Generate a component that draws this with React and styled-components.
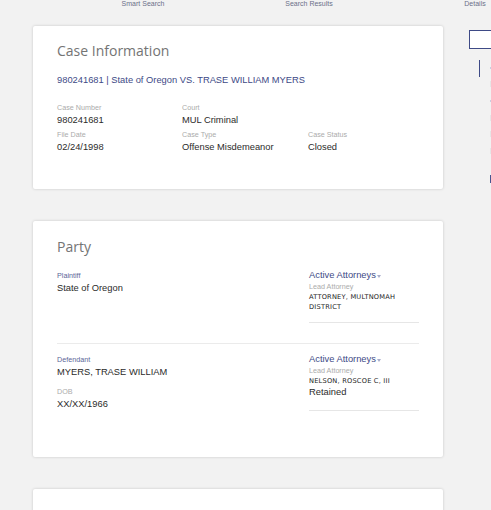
import React from "react";
import styled, { createGlobalStyle } from "styled-components";

const Global = createGlobalStyle`
  html, body { margin: 0; padding: 0; background: #f2f2f2; overflow: hidden; }
  body { font-family: "Liberation Sans", Arial, sans-serif; width: 491px; height: 510px; }
`;

const Page = styled.div`
  width: 491px;
  height: 510px;
  overflow: hidden;
`;

const Nav = styled.nav`
  display: grid;
  grid-template-columns: repeat(3, 166px);
  margin-left: 60px;
  width: 498px;
  height: 26px;
`;

const NavItem = styled.div`
  text-align: center;
  font-size: 7px;
  color: #6b7089;
  line-height: 8px;
`;

const Body = styled.div`
  display: flex;
  align-items: flex-start;
`;

const Main = styled.div`
  margin-left: 33px;
  width: 410px;
  flex: none;
  display: flex;
  flex-direction: column;
  gap: 32px;
`;

const Card = styled.section`
  background: #fff;
  box-shadow: 0 0 3px rgba(0, 0, 0, 0.18);
  border-radius: 2px;
  padding: ${(p) => p.$pt}px 24px 0;
  height: ${(p) => p.$h}px;
  box-sizing: border-box;
`;

const Title = styled.h2`
  margin: 0;
  font-family: "Open Sans", "Liberation Sans", sans-serif;
  font-weight: 400;
  font-size: 14px;
  color: #747474;
  line-height: 18px;
`;

const Caption = styled.div`
  margin-top: 14px;
  font-size: 9.33px;
  color: #3e4a86;
  line-height: 12px;
`;

const Grid = styled.div`
  margin-top: 17.5px;
  display: grid;
  grid-template-columns: 125px 126px 110px;
  row-gap: 3px;
`;

const Field = styled.div`
  display: flex;
  flex-direction: column;
`;

const Label = styled.div`
  font-size: 7.2px;
  line-height: 9px;
  margin-top: ${(p) => p.$mt || 0}px;
  color: ${(p) => (p.$accent ? "#5b6698" : "#ababab")};
`;

const Value = styled.div`
  font-size: 9.33px;
  line-height: ${(p) => p.$lh || 14}px;
  margin-top: ${(p) => (p.$mt === undefined ? 1 : p.$mt)}px;
  color: #2b2b2b;
`;

const PartyRow = styled.div`
  display: flex;
  justify-content: space-between;
  padding: ${(p) => p.$pad};
  border-bottom: ${(p) => (p.$line ? "1px solid #ebebeb" : "none")};
`;

const PartyInfo = styled.div`
  display: flex;
  flex-direction: column;
`;

const Attorneys = styled.div`
  width: 110px;
  border-bottom: 1px solid #e6e6e6;
  padding-bottom: ${(p) => p.$pb}px;
  display: flex;
  flex-direction: column;
`;

const AttTitle = styled.div`
  font-size: 9.33px;
  line-height: 9px;
  color: #3e4a86;
  display: flex;
  align-items: center;
  gap: 1.5px;
`;

const Caret = styled.span`
  width: 0;
  height: 0;
  border-left: 2.5px solid transparent;
  border-right: 2.5px solid transparent;
  border-top: 3px solid #a9aecb;
  margin-top: 1px;
`;

const AttName = styled.div`
  font-family: "DejaVu Sans", Verdana, sans-serif;
  font-size: 6.67px;
  letter-spacing: 0.2px;
  line-height: 10px;
  color: #1a1a1a;
  white-space: nowrap;
  margin-top: ${(p) => p.$mt || 0}px;
`;

const Side = styled.aside`
  margin-left: 26px;
  margin-top: 4px;
  display: flex;
  flex-direction: column;
  flex: none;
  width: 40px;
`;

const SideBox = styled.div`
  width: 40px;
  height: 19px;
  border: 1px solid #3e4a86;
  background: #fff;
  box-sizing: border-box;
`;

const SideRail = styled.div`
  margin-top: 11px;
  margin-left: 10px;
  display: flex;
  gap: 10px;
`;

const RailLine = styled.div`
  width: 1px;
  height: 17px;
  background: #3e4a86;
`;

const RailItems = styled.div`
  display: flex;
  flex-direction: column;
  padding-top: 7px;
`;

const RailMark = styled.div`
  width: 6px;
  height: ${(p) => p.$h}px;
  margin-bottom: ${(p) => p.$mb}px;
  background: ${(p) => p.$c};
`;

export default function App() {
  return (
    <Page>
      <Global />
      <Nav>
        <NavItem>Smart Search</NavItem>
        <NavItem>Search Results</NavItem>
        <NavItem>Details</NavItem>
      </Nav>
      <Body>
        <Main>
          <Card $h={163} $pt={15.5}>
            <Title>Case Information</Title>
            <Caption>980241681 | State of Oregon VS. TRASE WILLIAM MYERS</Caption>
            <Grid>
              <Field>
                <Label>Case Number</Label>
                <Value>980241681</Value>
              </Field>
              <Field>
                <Label>Court</Label>
                <Value>MUL Criminal</Value>
              </Field>
              <div />
              <Field>
                <Label>File Date</Label>
                <Value>02/24/1998</Value>
              </Field>
              <Field>
                <Label>Case Type</Label>
                <Value>Offense Misdemeanor</Value>
              </Field>
              <Field>
                <Label>Case Status</Label>
                <Value>Closed</Value>
              </Field>
            </Grid>
          </Card>
          <Card $h={236} $pt={17}>
            <Title>Party</Title>
            <PartyRow $pad="15px 0 20px" $line>
              <PartyInfo>
                <Label $accent>Plaintiff</Label>
                <Value>State of Oregon</Value>
              </PartyInfo>
              <Attorneys $pb={10}>
                <AttTitle>
                  Active Attorneys<Caret />
                </AttTitle>
                <Label $mt={2}>Lead Attorney</Label>
                <AttName $mt={0.5}>ATTORNEY, MULTNOMAH</AttName>
                <AttName>DISTRICT</AttName>
              </Attorneys>
            </PartyRow>
            <PartyRow $pad="11.5px 0 0">
              <PartyInfo>
                <Label $accent>Defendant</Label>
                <Value>MYERS, TRASE WILLIAM</Value>
                <Label $mt={7.8}>DOB</Label>
                <Value>XX/XX/1966</Value>
              </PartyInfo>
              <Attorneys $pb={11}>
                <AttTitle>
                  Active Attorneys<Caret />
                </AttTitle>
                <Label $mt={2}>Lead Attorney</Label>
                <AttName $mt={0.5}>NELSON, ROSCOE C, III</AttName>
                <Value $mt={0} $lh={13}>Retained</Value>
              </Attorneys>
            </PartyRow>
          </Card>
          <Card $h={60} $pt={15} />
        </Main>
        <Side>
          <SideBox />
          <SideRail>
            <RailLine />
            <RailItems>
              <RailMark $h={2} $mb={12} $c="#c9cde0" />
              <RailMark $h={6} $mb={13} $c="#e6e6e6" />
              <RailMark $h={2} $mb={13} $c="#c9cde0" />
              <RailMark $h={6} $mb={10} $c="#e6e6e6" />
              <RailMark $h={6} $mb={11} $c="#e6e6e6" />
              <RailMark $h={6} $mb={21} $c="#e6e6e6" />
              <RailMark $h={8} $mb={0} $c="#4a5590" />
            </RailItems>
          </SideRail>
        </Side>
      </Body>
    </Page>
  );
}
